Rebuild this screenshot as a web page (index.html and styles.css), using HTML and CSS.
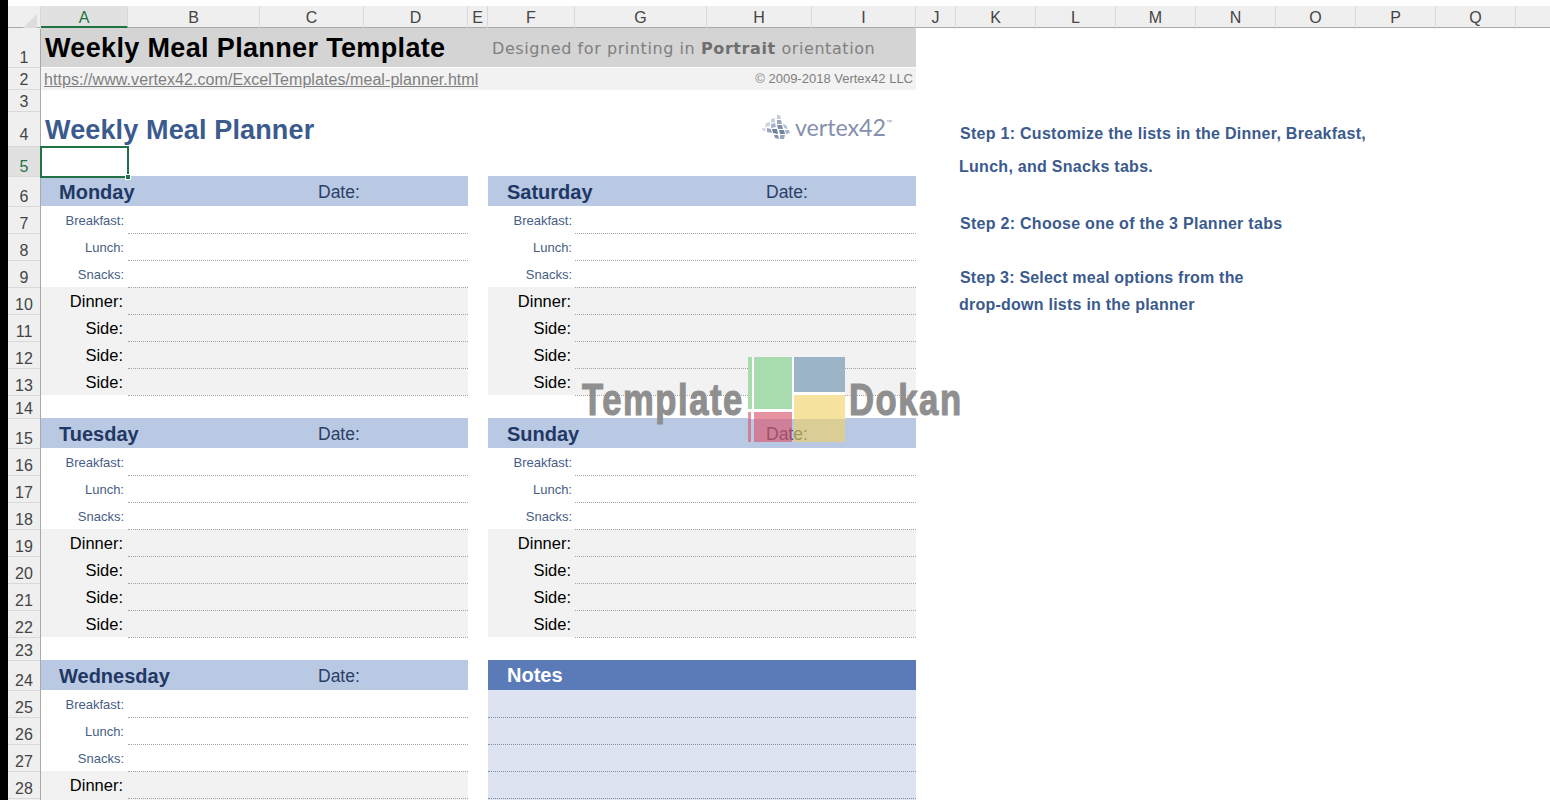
FILE: index.html
```html
<!DOCTYPE html>
<html lang="en">
<head>
<meta charset="utf-8">
<title>Weekly Meal Planner</title>
<link rel="stylesheet" href="styles.css">
</head>
<body>
<div class="app">
  <div class="edge"></div>
  <div class="workbook">
    <div class="columns">
      <div class="corner"><span class="corner-mark"></span></div>
      <div class="col active">A</div><div class="col">B</div><div class="col">C</div><div class="col">D</div><div class="col">E</div>
      <div class="col">F</div><div class="col">G</div><div class="col">H</div><div class="col">I</div><div class="col">J</div>
      <div class="col">K</div><div class="col">L</div><div class="col">M</div><div class="col">N</div><div class="col">O</div>
      <div class="col">P</div><div class="col">Q</div><div class="col"></div>
    </div>
    <div class="body">
      <div class="rows">
        <div class="row">1</div><div class="row">2</div><div class="row">3</div><div class="row tall">4</div>
        <div class="row active">5</div><div class="row">6</div><div class="row">7</div><div class="row">8</div>
        <div class="row">9</div><div class="row">10</div><div class="row">11</div><div class="row">12</div>
        <div class="row">13</div><div class="row">14</div><div class="row">15</div><div class="row">16</div>
        <div class="row">17</div><div class="row">18</div><div class="row">19</div><div class="row">20</div>
        <div class="row">21</div><div class="row">22</div><div class="row">23</div><div class="row">24</div>
        <div class="row">25</div><div class="row">26</div><div class="row">27</div><div class="row">28</div>
        <div class="row"></div>
      </div>
      <main class="sheet">
        <div class="page">
          <div class="band-title">
            <div class="band-name">Weekly Meal Planner Template</div>
            <div class="band-note">Designed for printing in <b>Portrait</b> orientation</div>
          </div>
          <div class="band-link">
            <a class="link" href="#">https://www.vertex42.com/ExcelTemplates/meal-planner.html</a>
            <span class="copyright">© 2009-2018 Vertex42 LLC</span>
          </div>
          <div class="heading">
            <h1 class="heading-text">Weekly Meal Planner</h1>
            <div class="logo">
              <svg class="logo-mark" width="30" height="26" viewBox="0 0 30 26">
                <g fill="#9aa6bd">
                  <polygon points="16,1 19,1 20,5 16,5" fill="#c3cbd9"/>
                  <polygon points="10,5 14,4 14,8 10,9" fill="#c9d0dd"/>
                  <polygon points="16,6 20,6 21,10 16,10"/>
                  <polygon points="5,9 9,8 9,12 4,13" fill="#ced4e0"/>
                  <polygon points="10,10 14,9 15,13 10,14" fill="#a9b4c8"/>
                  <polygon points="16,11 21,11 22,15 17,15" fill="#7f8dab"/>
                  <polygon points="22,10 25,11 27,15 23,14" fill="#b9c2d2"/>
                  <polygon points="1,14 4,14 5,17 2,17" fill="#d5dae4"/>
                  <polygon points="6,14 10,15 11,19 6,18" fill="#98a5bd"/>
                  <polygon points="11,15 16,15 17,20 12,19" fill="#6f7f9f"/>
                  <polygon points="18,16 23,16 24,20 19,20" fill="#74839f"/>
                  <polygon points="24,16 28,16 29,19 25,20" fill="#aab4c7"/>
                  <polygon points="13,21 17,21 18,25 14,24" fill="#8291ac"/>
                  <polygon points="19,21 24,21 23,25 19,25" fill="#99a6bc"/>
                </g>
              </svg>
              <span class="logo-name">vertex42</span><span class="logo-tm">™</span>
            </div>
          </div>
          <div class="selection-row"><div class="selection"><span class="selection-handle"></span></div></div>
          <div class="planner">
            <section class="day">
              <header class="day-head"><span class="day-name">Monday</span><span class="day-date">Date:</span></header>
              <div class="line meal"><span class="line-label">Breakfast:</span><span class="line-value"></span></div>
              <div class="line meal"><span class="line-label">Lunch:</span><span class="line-value"></span></div>
              <div class="line meal"><span class="line-label">Snacks:</span><span class="line-value"></span></div>
              <div class="line main"><span class="line-label">Dinner:</span><span class="line-value"></span></div>
              <div class="line main"><span class="line-label">Side:</span><span class="line-value"></span></div>
              <div class="line main"><span class="line-label">Side:</span><span class="line-value"></span></div>
              <div class="line main"><span class="line-label">Side:</span><span class="line-value"></span></div>
            </section>
            <section class="day day-right">
              <header class="day-head"><span class="day-name">Saturday</span><span class="day-date">Date:</span></header>
              <div class="line meal"><span class="line-label">Breakfast:</span><span class="line-value"></span></div>
              <div class="line meal"><span class="line-label">Lunch:</span><span class="line-value"></span></div>
              <div class="line meal"><span class="line-label">Snacks:</span><span class="line-value"></span></div>
              <div class="line main"><span class="line-label">Dinner:</span><span class="line-value"></span></div>
              <div class="line main"><span class="line-label">Side:</span><span class="line-value"></span></div>
              <div class="line main"><span class="line-label">Side:</span><span class="line-value"></span></div>
              <div class="line main"><span class="line-label">Side:</span><span class="line-value"></span></div>
            </section>
            <section class="day">
              <header class="day-head"><span class="day-name">Tuesday</span><span class="day-date">Date:</span></header>
              <div class="line meal"><span class="line-label">Breakfast:</span><span class="line-value"></span></div>
              <div class="line meal"><span class="line-label">Lunch:</span><span class="line-value"></span></div>
              <div class="line meal"><span class="line-label">Snacks:</span><span class="line-value"></span></div>
              <div class="line main"><span class="line-label">Dinner:</span><span class="line-value"></span></div>
              <div class="line main"><span class="line-label">Side:</span><span class="line-value"></span></div>
              <div class="line main"><span class="line-label">Side:</span><span class="line-value"></span></div>
              <div class="line main"><span class="line-label">Side:</span><span class="line-value"></span></div>
            </section>
            <section class="day day-right">
              <header class="day-head"><span class="day-name">Sunday</span><span class="day-date">Date:</span></header>
              <div class="line meal"><span class="line-label">Breakfast:</span><span class="line-value"></span></div>
              <div class="line meal"><span class="line-label">Lunch:</span><span class="line-value"></span></div>
              <div class="line meal"><span class="line-label">Snacks:</span><span class="line-value"></span></div>
              <div class="line main"><span class="line-label">Dinner:</span><span class="line-value"></span></div>
              <div class="line main"><span class="line-label">Side:</span><span class="line-value"></span></div>
              <div class="line main"><span class="line-label">Side:</span><span class="line-value"></span></div>
              <div class="line main"><span class="line-label">Side:</span><span class="line-value"></span></div>
            </section>
            <section class="day">
              <header class="day-head"><span class="day-name">Wednesday</span><span class="day-date">Date:</span></header>
              <div class="line meal"><span class="line-label">Breakfast:</span><span class="line-value"></span></div>
              <div class="line meal"><span class="line-label">Lunch:</span><span class="line-value"></span></div>
              <div class="line meal"><span class="line-label">Snacks:</span><span class="line-value"></span></div>
              <div class="line main"><span class="line-label">Dinner:</span><span class="line-value"></span></div>
              <div class="line main"><span class="line-label"></span><span class="line-value"></span></div>
            </section>
            <section class="notes">
              <header class="notes-head">Notes</header>
              <div class="notes-line"></div>
              <div class="notes-line"></div>
              <div class="notes-line"></div>
              <div class="notes-line"></div>
              <div class="notes-line"></div>
            </section>
          </div>
        </div>
        <aside class="steps">
          <p class="step step-1">Step 1: Customize the lists in the Dinner, Breakfast,</p>
          <p class="step step-1b">Lunch, and Snacks tabs.</p>
          <p class="step step-2">Step 2: Choose one of the 3 Planner tabs</p>
          <p class="step step-3">Step 3: Select meal options from the</p>
          <p class="step step-3b">drop-down lists in the planner</p>
        </aside>
        <div class="watermark">
          <span class="wm-word wm-left">Template</span>
          <div class="wm-mark">
            <span class="wm-backing"></span>
            <span class="wm-strip wm-strip-green"></span>
            <span class="wm-strip wm-strip-red"></span>
            <span class="wm-box wm-green"></span>
            <span class="wm-box wm-blue"></span>
            <span class="wm-box wm-red"></span>
            <span class="wm-box wm-yellow"></span>
          </div>
          <span class="wm-word wm-right">Dokan</span>
        </div>
      </main>
    </div>
  </div>
</div>
</body>
</html>
```
FILE: styles.css
```css
* { box-sizing: border-box; }
html, body { margin: 0; height: 100%; overflow: hidden; background: #fff; }
body { font-family: "Liberation Sans", Arial, sans-serif; color: #000; }

.app { display: flex; width: 1550px; height: 800px; overflow: hidden; }
.edge { width: 8px; flex: none; background: #000; }
.workbook { flex: 1; padding-top: 6px; min-width: 0; }

/* column headers */
.columns {
  display: grid;
  grid-template-columns: 33px 87px 132px 104px 104px 20px 87px 132px 105px 104px 40px repeat(8, 80px) 34px;
  height: 22px;
  background: #efefef;
  border-bottom: 1px solid #a9a9a9;
}
.corner { position: relative; border-right: 1px solid #d8d8d8; }
.corner-mark {
  position: absolute; right: 3px; bottom: 1px; width: 0; height: 0;
  border-style: solid; border-width: 0 0 14px 14px;
  border-color: transparent transparent #dcdcdc transparent;
}
.col {
  font-size: 16px; line-height: 23px; text-align: center; color: #444;
  border-right: 1px solid #d9d9d9;
}
.col.active { background: #e1e1e1; color: #217346; border-bottom: 2px solid #217346; height: 22px; }

.body { display: flex; height: 800px; }

/* row headers */
.rows {
  width: 33px; flex: none;
  display: grid;
  grid-template-rows: 40px 22px 22px 35px 30px 30px repeat(7, 27px) 23px 30px repeat(7, 27px) 23px 30px repeat(4, 27px) 27px;
  align-content: start;
  background: #efefef;
  border-right: 1px solid #a9a9a9;
}
.row {
  display: flex; align-items: flex-end; justify-content: center;
  font-size: 16px; line-height: 18px; color: #444;
  border-bottom: 1px solid #d9d9d9;
}
.row.tall { padding-bottom: 2px; }
.row.active { background: #e1e1e1; color: #217346; }

/* sheet */
.sheet { position: relative; flex: 1; display: flex; min-width: 0; }
.page { width: 875px; flex: none; }

.band-title {
  display: flex; align-items: center; height: 39px; margin-bottom: 1px; background: #d4d4d4;
  padding-left: 4px;
}
.band-name { width: 447px; font-size: 27px; font-weight: 700; letter-spacing: .35px; color: #000; line-height: 39px; padding-top: 2px; }
.band-note { font-family: "DejaVu Sans", Verdana, sans-serif; font-size: 16px; color: #7f7f7f; letter-spacing: .58px; padding-top: 2px; }
.band-note b { color: #6f6f6f; }

.band-link {
  display: flex; align-items: center; justify-content: space-between;
  height: 22px; background: #f2f2f2; padding: 2px 3px 0 3px;
}
.link { font-size: 16px; letter-spacing: .07px; color: #7f7f7f; text-decoration: underline; }
.copyright { font-size: 13px; color: #7f7f7f; position: relative; top: -2px; }

.heading {
  display: flex; align-items: center; justify-content: space-between;
  height: 34px; margin-top: 23px; padding: 0 24px 0 4px;
}
.heading-text { margin: 0; font-size: 27px; line-height: 34px; font-weight: 700; color: #3b5a8e; letter-spacing: .14px; }

.logo { display: flex; align-items: center; color: #8590ad; padding-bottom: 6px; }
.logo-mark { margin-right: 4px; }
.logo-name { font-family: "Lato", sans-serif; font-weight: 400; font-size: 23.2px; line-height: 28px; }
.logo-tm { font-size: 6px; align-self: flex-start; margin-top: 6px; }

.selection-row { height: 30px; }
.selection {
  position: relative; width: 89px; height: 32px; margin-left: -1px; margin-top: -1px;
  border: 2px solid #217346; background: #fff; z-index: 2;
}
.selection-handle {
  position: absolute; right: -4px; bottom: -4px; width: 6px; height: 6px;
  background: #217346; border: 1px solid #fff;
}

/* planner */
.planner { display: grid; grid-template-columns: 427px 428px; column-gap: 20px; row-gap: 23px; }
.day-head {
  display: flex; align-items: center; height: 30px; background: #b9c8e3; padding-left: 18px;
  color: #1f3864;
}
.day-right .day-head { padding-left: 19px; }
.day-name { width: 259px; font-size: 20px; font-weight: 700; padding-top: 3px; }
.day-date { font-size: 17.5px; color: #2b3f66; padding-top: 2px; }

.line { display: flex; height: 27px; }
.line-label { width: 87px; flex: none; text-align: right; padding-right: 4px; }
.line-value {
  position: relative; flex: 1; align-self: flex-start; height: 28px;
  border-bottom: 1px dotted #a3a3a3;
}
.day-right .line-label { padding-right: 3px; }
.meal .line-label { font-size: 13px; line-height: 30px; color: #465d87; }
.main { background: #f2f2f2; }
.main .line-label { font-size: 16.5px; line-height: 28px; color: #000; padding-right: 5px; }
.day-right .main .line-label { padding-right: 4px; }

.notes-head {
  height: 30px; line-height: 31px; padding-left: 19px; background: #5a7bb8;
  color: #fff; font-size: 20px; font-weight: 700;
}
.notes-line { height: 27px; background: #dde3f1; }
.notes-line + .notes-line { border-top: 1px dotted #7f8fa8; }

/* steps */
.steps { padding-left: 43px; padding-top: 96px; }
.step { margin: 0; font-size: 16px; line-height: 20px; font-weight: 700; color: #3b5a8e; letter-spacing: .28px; white-space: nowrap; }
.step-1 { margin-left: 1px; }
.step-1b { margin-top: 13px; }
.step-2 { margin-top: 37px; margin-left: 1px; }
.step-3 { margin-top: 34px; margin-left: 1px; letter-spacing: .2px; }
.step-3b { margin-top: 7px; letter-spacing: .24px; }

/* watermark */
.watermark {
  position: absolute; left: 541px; top: 329px; width: 382px; height: 85px;
  pointer-events: none;
}
.wm-word {
  font-family: "Liberation Sans", Arial, sans-serif;
  font-weight: 700; font-size: 45px; line-height: 45px; color: #8f8f8f; letter-spacing: 2px;
  -webkit-text-stroke: 1.2px #8f8f8f;
  position: absolute; top: 20px; white-space: nowrap;
  transform: scaleX(.77); transform-origin: left center;
}
.wm-left { left: 0; }
.wm-right { left: 267px; }
.wm-mark { position: absolute; left: 166px; top: 0; width: 97px; height: 85px; }
.wm-backing { position: absolute; display: block; left: 0; top: 0; width: 97px; height: 62px; background: #fff; }
.wm-strip, .wm-box { position: absolute; display: block; }
.wm-strip-green { left: 0; top: 0; width: 4px; height: 52px; background: #a8dcae; }
.wm-strip-red { left: 0; top: 55px; width: 3px; height: 30px; background: rgba(218, 88, 110, .65); }
.wm-green { left: 6px; top: 0; width: 38px; height: 52px; background: #a8dcae; }
.wm-blue { left: 46px; top: 0; width: 51px; height: 35px; background: #9cb4c8; }
.wm-red { left: 6px; top: 55px; width: 38px; height: 30px; background: rgba(218, 88, 110, .65); }
.wm-yellow { left: 46px; top: 38px; width: 51px; height: 47px; background: rgba(240, 208, 97, .6); }
```
